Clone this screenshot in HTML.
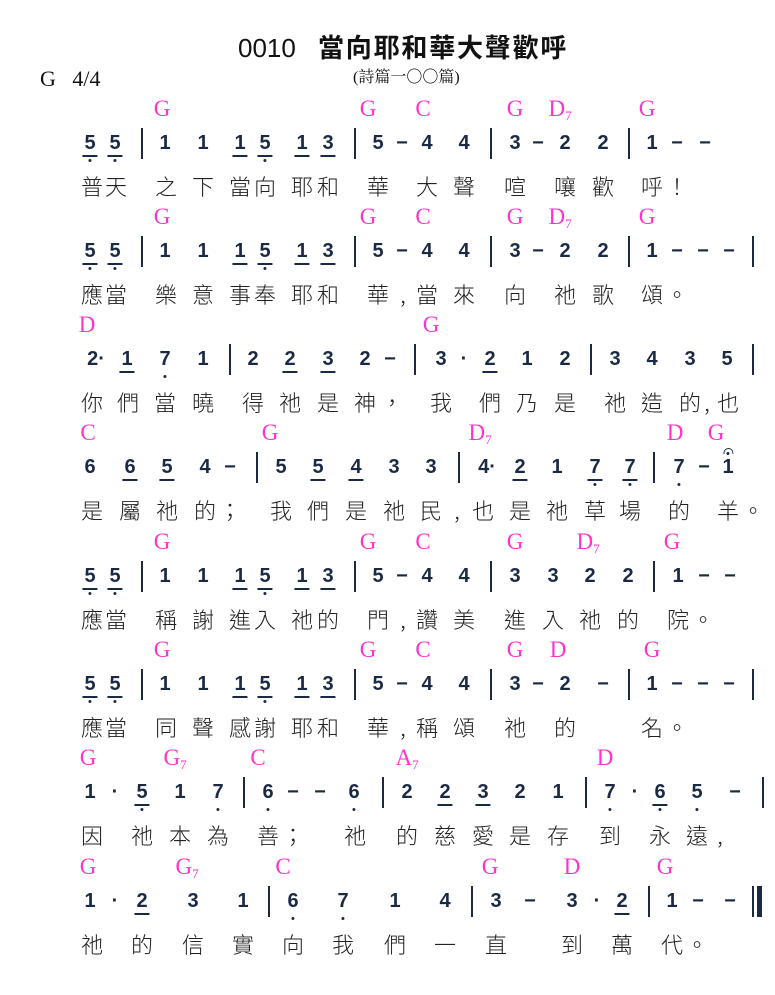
<!DOCTYPE html>
<html><head><meta charset="utf-8"><style>
body{margin:0;background:#fff;width:775px;height:995px;position:relative;overflow:hidden}
.s{position:absolute;left:0;width:775px;height:108px}
.c,.n,.l,.b,.t{position:absolute}
.c{top:0;transform:translateX(-50%);font:23px/24px "Liberation Serif",serif;color:#ff33cc}
.c sub{font-size:13px;vertical-align:-4px;line-height:0}
.n{top:36px;transform:translateX(-50%);font:bold 20px/20px "Liberation Sans",sans-serif;color:#1b2a44}
.u::after{content:"";position:absolute;left:-2px;right:-2px;top:22px;height:1.6px;background:#1b2a44}
.d::before{content:"";position:absolute;left:50%;margin-left:-1.5px;top:26px;width:3px;height:3px;border-radius:50%;background:#1b2a44}
.f::before{content:"";position:absolute;left:50%;margin-left:-5px;top:-9px;width:8px;height:5px;border:1.5px solid #1b2a44;border-bottom:none;border-radius:6px 6px 0 0}
.f::after{content:"";position:absolute;left:50%;margin-left:-1.5px;top:-5px;width:3px;height:3px;border-radius:50%;background:#1b2a44}
.b{top:31px;width:1.6px;height:31px;background:#1b2a44}
.l{top:76px;transform:translateX(-50%);font:22px/26px "Noto Sans CJK TC","WenQuanYi Zen Hei",sans-serif;color:#222;font-weight:300}
</style></head><body>
<div class="t" style="left:238px;top:33px;font:26px/30px 'Liberation Sans',sans-serif;color:#111">0010</div>
<div class="t" style="left:318px;top:32px;font:bold 26px/30px 'Noto Sans CJK TC',sans-serif;color:#111;letter-spacing:1.8px">當向耶和華大聲歡呼</div>
<div class="t" style="left:353px;top:68px;font:16px/20px 'Liberation Serif','Noto Serif CJK SC',serif;color:#111">(詩篇一〇〇篇)</div>
<div class="t" style="left:40px;top:66px;font:22px/26px 'Liberation Serif',serif;color:#111">G&nbsp;&nbsp; 4/4</div>

<!-- 1 -->
<div class="s" style="top:97px">
<span class="c" style="left:162px">G</span><span class="c" style="left:368px">G</span><span class="c" style="left:423px">C</span><span class="c" style="left:515px">G</span><span class="c" style="left:560px">D<sub>7</sub></span><span class="c" style="left:647px">G</span>
<span class="n u d" style="left:90px">5</span><span class="n u d" style="left:115px">5</span><span class="b" style="left:141px"></span>
<span class="n" style="left:165px">1</span><span class="n" style="left:203px">1</span><span class="n u" style="left:240px">1</span><span class="n u d" style="left:265px">5</span><span class="n u" style="left:302px">1</span><span class="n u" style="left:328px">3</span><span class="b" style="left:354px"></span>
<span class="n" style="left:378px">5</span><span class="n" style="left:402px">−</span><span class="n" style="left:427px">4</span><span class="n" style="left:464px">4</span><span class="b" style="left:490px"></span>
<span class="n" style="left:515px">3</span><span class="n" style="left:538px">−</span><span class="n" style="left:565px">2</span><span class="n" style="left:603px">2</span><span class="b" style="left:628px"></span>
<span class="n" style="left:652px">1</span><span class="n" style="left:677px">−</span><span class="n" style="left:705px">−</span>
<span class="l" style="left:92px">普</span><span class="l" style="left:116px">天</span><span class="l" style="left:166px">之</span><span class="l" style="left:203px">下</span><span class="l" style="left:240px">當</span><span class="l" style="left:265px">向</span><span class="l" style="left:302px">耶</span><span class="l" style="left:328px">和</span><span class="l" style="left:378px">華</span><span class="l" style="left:427px">大</span><span class="l" style="left:464px">聲</span><span class="l" style="left:515px">喧</span><span class="l" style="left:565px">嚷</span><span class="l" style="left:603px">歡</span><span class="l" style="left:652px">呼</span><span class="l" style="left:677px">！</span>
</div>

<!-- 2 -->
<div class="s" style="top:205px">
<span class="c" style="left:162px">G</span><span class="c" style="left:368px">G</span><span class="c" style="left:423px">C</span><span class="c" style="left:515px">G</span><span class="c" style="left:560px">D<sub>7</sub></span><span class="c" style="left:647px">G</span>
<span class="n u d" style="left:90px">5</span><span class="n u d" style="left:115px">5</span><span class="b" style="left:141px"></span>
<span class="n" style="left:165px">1</span><span class="n" style="left:203px">1</span><span class="n u" style="left:240px">1</span><span class="n u d" style="left:265px">5</span><span class="n u" style="left:302px">1</span><span class="n u" style="left:328px">3</span><span class="b" style="left:354px"></span>
<span class="n" style="left:378px">5</span><span class="n" style="left:402px">−</span><span class="n" style="left:427px">4</span><span class="n" style="left:464px">4</span><span class="b" style="left:490px"></span>
<span class="n" style="left:515px">3</span><span class="n" style="left:538px">−</span><span class="n" style="left:565px">2</span><span class="n" style="left:603px">2</span><span class="b" style="left:628px"></span>
<span class="n" style="left:652px">1</span><span class="n" style="left:677px">−</span><span class="n" style="left:703px">−</span><span class="n" style="left:729px">−</span><span class="b" style="left:752px"></span>
<span class="l" style="left:92px">應</span><span class="l" style="left:116px">當</span><span class="l" style="left:166px">樂</span><span class="l" style="left:203px">意</span><span class="l" style="left:240px">事</span><span class="l" style="left:265px">奉</span><span class="l" style="left:302px">耶</span><span class="l" style="left:328px">和</span><span class="l" style="left:378px">華</span><span class="l" style="left:403px">,</span><span class="l" style="left:427px">當</span><span class="l" style="left:464px">來</span><span class="l" style="left:515px">向</span><span class="l" style="left:565px">祂</span><span class="l" style="left:603px">歌</span><span class="l" style="left:652px">頌</span><span class="l" style="left:677px">。</span>
</div>

<!-- 3 -->
<div class="s" style="top:313px">
<span class="c" style="left:87px">D</span><span class="c" style="left:431px">G</span>
<span class="n" style="left:96px">2·</span><span class="n u" style="left:127px">1</span><span class="n d" style="left:165px">7</span><span class="n" style="left:203px">1</span><span class="b" style="left:229px"></span>
<span class="n" style="left:253px">2</span><span class="n u" style="left:290px">2</span><span class="n u" style="left:328px">3</span><span class="n" style="left:365px">2</span><span class="n" style="left:390px">−</span><span class="b" style="left:414px"></span>
<span class="n" style="left:441px">3</span><span class="n" style="left:464px">·</span><span class="n u" style="left:490px">2</span><span class="n" style="left:527px">1</span><span class="n" style="left:565px">2</span><span class="b" style="left:590px"></span>
<span class="n" style="left:615px">3</span><span class="n" style="left:652px">4</span><span class="n" style="left:690px">3</span><span class="n" style="left:727px">5</span><span class="b" style="left:752px"></span>
<span class="l" style="left:92px">你</span><span class="l" style="left:128px">們</span><span class="l" style="left:165px">當</span><span class="l" style="left:203px">曉</span><span class="l" style="left:253px">得</span><span class="l" style="left:290px">祂</span><span class="l" style="left:328px">是</span><span class="l" style="left:365px">神</span><span class="l" style="left:392px">，</span><span class="l" style="left:441px">我</span><span class="l" style="left:490px">們</span><span class="l" style="left:527px">乃</span><span class="l" style="left:565px">是</span><span class="l" style="left:615px">祂</span><span class="l" style="left:652px">造</span><span class="l" style="left:690px">的</span><span class="l" style="left:707px">,</span><span class="l" style="left:728px">也</span>
</div>

<!-- 4 -->
<div class="s" style="top:421px">
<span class="c" style="left:88px">C</span><span class="c" style="left:270px">G</span><span class="c" style="left:480px">D<sub>7</sub></span><span class="c" style="left:675px">D</span><span class="c" style="left:716px">G</span>
<span class="n" style="left:90px">6</span><span class="n u" style="left:130px">6</span><span class="n u" style="left:167px">5</span><span class="n" style="left:205px">4</span><span class="n" style="left:230px">−</span><span class="b" style="left:256px"></span>
<span class="n" style="left:281px">5</span><span class="n u" style="left:318px">5</span><span class="n u" style="left:356px">4</span><span class="n" style="left:394px">3</span><span class="n" style="left:431px">3</span><span class="b" style="left:458px"></span>
<span class="n" style="left:487px">4·</span><span class="n u" style="left:520px">2</span><span class="n" style="left:557px">1</span><span class="n u d" style="left:595px">7</span><span class="n u d" style="left:630px">7</span><span class="b" style="left:653px"></span>
<span class="n d" style="left:679px">7</span><span class="n" style="left:704px">−</span><span class="n f" style="left:728px">1</span>
<span class="l" style="left:92px">是</span><span class="l" style="left:130px">屬</span><span class="l" style="left:167px">祂</span><span class="l" style="left:205px">的</span><span class="l" style="left:230px">；</span><span class="l" style="left:281px">我</span><span class="l" style="left:318px">們</span><span class="l" style="left:356px">是</span><span class="l" style="left:394px">祂</span><span class="l" style="left:431px">民</span><span class="l" style="left:457px">,</span><span class="l" style="left:483px">也</span><span class="l" style="left:520px">是</span><span class="l" style="left:557px">祂</span><span class="l" style="left:595px">草</span><span class="l" style="left:630px">場</span><span class="l" style="left:679px">的</span><span class="l" style="left:728px">羊</span><span class="l" style="left:753px">。</span>
</div>

<!-- 5 -->
<div class="s" style="top:530px">
<span class="c" style="left:162px">G</span><span class="c" style="left:368px">G</span><span class="c" style="left:423px">C</span><span class="c" style="left:515px">G</span><span class="c" style="left:588px">D<sub>7</sub></span><span class="c" style="left:672px">G</span>
<span class="n u d" style="left:90px">5</span><span class="n u d" style="left:115px">5</span><span class="b" style="left:141px"></span>
<span class="n" style="left:165px">1</span><span class="n" style="left:203px">1</span><span class="n u" style="left:240px">1</span><span class="n u d" style="left:265px">5</span><span class="n u" style="left:302px">1</span><span class="n u" style="left:328px">3</span><span class="b" style="left:354px"></span>
<span class="n" style="left:378px">5</span><span class="n" style="left:402px">−</span><span class="n" style="left:427px">4</span><span class="n" style="left:464px">4</span><span class="b" style="left:490px"></span>
<span class="n" style="left:515px">3</span><span class="n" style="left:553px">3</span><span class="n" style="left:590px">2</span><span class="n" style="left:628px">2</span><span class="b" style="left:653px"></span>
<span class="n" style="left:678px">1</span><span class="n" style="left:704px">−</span><span class="n" style="left:730px">−</span>
<span class="l" style="left:92px">應</span><span class="l" style="left:116px">當</span><span class="l" style="left:166px">稱</span><span class="l" style="left:203px">謝</span><span class="l" style="left:240px">進</span><span class="l" style="left:265px">入</span><span class="l" style="left:302px">祂</span><span class="l" style="left:328px">的</span><span class="l" style="left:378px">門</span><span class="l" style="left:403px">,</span><span class="l" style="left:427px">讚</span><span class="l" style="left:464px">美</span><span class="l" style="left:515px">進</span><span class="l" style="left:553px">入</span><span class="l" style="left:590px">祂</span><span class="l" style="left:628px">的</span><span class="l" style="left:678px">院</span><span class="l" style="left:703px">。</span>
</div>

<!-- 6 -->
<div class="s" style="top:638px">
<span class="c" style="left:162px">G</span><span class="c" style="left:368px">G</span><span class="c" style="left:423px">C</span><span class="c" style="left:515px">G</span><span class="c" style="left:558px">D</span><span class="c" style="left:652px">G</span>
<span class="n u d" style="left:90px">5</span><span class="n u d" style="left:115px">5</span><span class="b" style="left:141px"></span>
<span class="n" style="left:165px">1</span><span class="n" style="left:203px">1</span><span class="n u" style="left:240px">1</span><span class="n u d" style="left:265px">5</span><span class="n u" style="left:302px">1</span><span class="n u" style="left:328px">3</span><span class="b" style="left:354px"></span>
<span class="n" style="left:378px">5</span><span class="n" style="left:402px">−</span><span class="n" style="left:427px">4</span><span class="n" style="left:464px">4</span><span class="b" style="left:490px"></span>
<span class="n" style="left:515px">3</span><span class="n" style="left:538px">−</span><span class="n" style="left:565px">2</span><span class="n" style="left:603px">−</span><span class="b" style="left:628px"></span>
<span class="n" style="left:652px">1</span><span class="n" style="left:677px">−</span><span class="n" style="left:703px">−</span><span class="n" style="left:729px">−</span><span class="b" style="left:752px"></span>
<span class="l" style="left:92px">應</span><span class="l" style="left:116px">當</span><span class="l" style="left:166px">同</span><span class="l" style="left:203px">聲</span><span class="l" style="left:240px">感</span><span class="l" style="left:265px">謝</span><span class="l" style="left:302px">耶</span><span class="l" style="left:328px">和</span><span class="l" style="left:378px">華</span><span class="l" style="left:403px">,</span><span class="l" style="left:427px">稱</span><span class="l" style="left:464px">頌</span><span class="l" style="left:515px">祂</span><span class="l" style="left:565px">的</span><span class="l" style="left:652px">名</span><span class="l" style="left:677px">。</span>
</div>

<!-- 7 -->
<div class="s" style="top:746px">
<span class="c" style="left:88px">G</span><span class="c" style="left:175px">G<sub>7</sub></span><span class="c" style="left:258px">C</span><span class="c" style="left:407px">A<sub>7</sub></span><span class="c" style="left:605px">D</span>
<span class="n" style="left:90px">1</span><span class="n" style="left:115px">·</span><span class="n u d" style="left:142px">5</span><span class="n" style="left:180px">1</span><span class="n d" style="left:218px">7</span><span class="b" style="left:243px"></span>
<span class="n d" style="left:268px">6</span><span class="n" style="left:293px">−</span><span class="n" style="left:320px">−</span><span class="n d" style="left:354px">6</span><span class="b" style="left:382px"></span>
<span class="n" style="left:407px">2</span><span class="n u" style="left:445px">2</span><span class="n u" style="left:483px">3</span><span class="n" style="left:520px">2</span><span class="n" style="left:558px">1</span><span class="b" style="left:585px"></span>
<span class="n d" style="left:610px">7</span><span class="n" style="left:635px">·</span><span class="n u d" style="left:660px">6</span><span class="n d" style="left:697px">5</span><span class="n" style="left:735px">−</span><span class="b" style="left:762px"></span>
<span class="l" style="left:92px">因</span><span class="l" style="left:142px">祂</span><span class="l" style="left:180px">本</span><span class="l" style="left:218px">為</span><span class="l" style="left:268px">善</span><span class="l" style="left:293px">；</span><span class="l" style="left:355px">祂</span><span class="l" style="left:407px">的</span><span class="l" style="left:445px">慈</span><span class="l" style="left:483px">愛</span><span class="l" style="left:520px">是</span><span class="l" style="left:558px">存</span><span class="l" style="left:610px">到</span><span class="l" style="left:660px">永</span><span class="l" style="left:697px">遠</span><span class="l" style="left:720px">,</span>
</div>

<!-- 8 -->
<div class="s" style="top:855px">
<span class="c" style="left:88px">G</span><span class="c" style="left:187px">G<sub>7</sub></span><span class="c" style="left:283px">C</span><span class="c" style="left:490px">G</span><span class="c" style="left:572px">D</span><span class="c" style="left:665px">G</span>
<span class="n" style="left:90px">1</span><span class="n" style="left:115px">·</span><span class="n u" style="left:142px">2</span><span class="n" style="left:193px">3</span><span class="n" style="left:243px">1</span><span class="b" style="left:268px"></span>
<span class="n d" style="left:293px">6</span><span class="n d" style="left:343px">7</span><span class="n" style="left:395px">1</span><span class="n" style="left:445px">4</span><span class="b" style="left:471px"></span>
<span class="n" style="left:496px">3</span><span class="n" style="left:530px">−</span><span class="n" style="left:572px">3</span><span class="n" style="left:597px">·</span><span class="n u" style="left:622px">2</span><span class="b" style="left:648px"></span>
<span class="n" style="left:672px">1</span><span class="n" style="left:698px">−</span><span class="n" style="left:730px">−</span><span class="b" style="left:752px"></span><span class="b" style="left:757px;width:5px"></span>
<span class="l" style="left:92px">祂</span><span class="l" style="left:142px">的</span><span class="l" style="left:193px">信</span><span class="l" style="left:243px">實</span><span class="l" style="left:293px">向</span><span class="l" style="left:343px">我</span><span class="l" style="left:395px">們</span><span class="l" style="left:445px">一</span><span class="l" style="left:496px">直</span><span class="l" style="left:572px">到</span><span class="l" style="left:622px">萬</span><span class="l" style="left:672px">代</span><span class="l" style="left:697px">。</span>
</div>
</body></html>
